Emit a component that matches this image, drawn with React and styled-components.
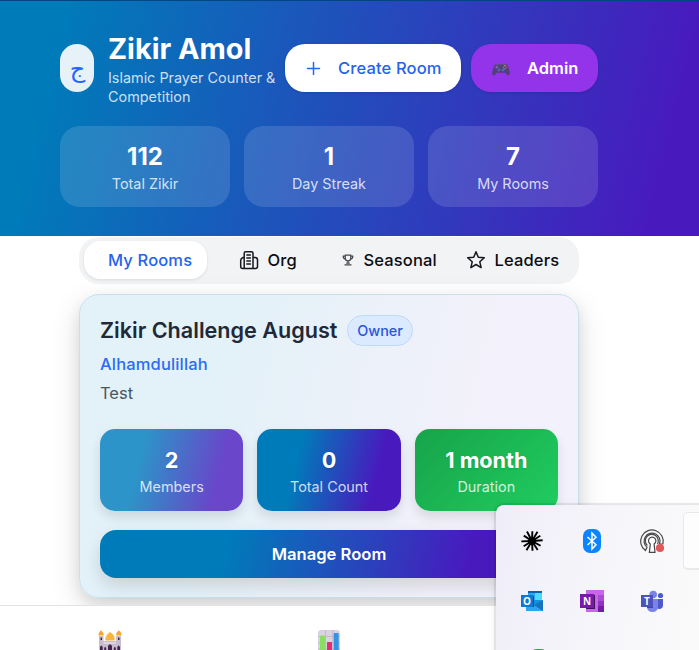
import React from "react";
import styled, { createGlobalStyle } from "styled-components";

const Global = createGlobalStyle`
  * { box-sizing: border-box; }
  html, body { margin: 0; background: #fff; overflow: hidden; }
  body { font-family: Inter, "Liberation Sans", sans-serif; }
`;

const Page = styled.div`
  position: relative;
  width: 699px;
  height: 650px;
  overflow: hidden;
  background: #fff;
`;

const Header = styled.header`
  height: 236px;
  border-top: 1px solid #004680;
  padding: 29px 101px 29px 60px;
  background: linear-gradient(104deg, #007bb9 9%, #481abe 93%) border-box;
`;

const HeaderRow = styled.div`
  display: flex;
  align-items: center;
  height: 76px;
`;

const Logo = styled.div`
  display: flex;
  align-items: center;
  justify-content: center;
  width: 34px;
  height: 48px;
  margin-right: 14px;
  border-radius: 17px;
  background: #e6f1f8;
  color: #2563ff;
  font: 24px/1 "DejaVu Sans", sans-serif;
  padding: 1px 0 0 1px;
`;

const Brand = styled.div`
  width: 177px;
`;

const Title = styled.h1`
  margin: 0;
  font-size: 28.8px;
  line-height: 38px;
  font-weight: 700;
  color: #fff;
  white-space: nowrap;
`;

const Subtitle = styled.p`
  margin: 0;
  font-size: 14.4px;
  line-height: 19px;
  color: rgba(255, 255, 255, 0.8);
  white-space: nowrap;
`;

const Action = styled.button`
  display: flex;
  align-items: center;
  width: ${(p) => p.$width}px;
  height: 48px;
  margin: 0 10px 0 0;
  padding: 0 0 0 20px;
  border: 0;
  border-radius: 20px;
  background: ${(p) => p.$bg};
  color: ${(p) => p.$color};
  font: ${(p) => p.$weight} 16.5px/24px Inter, sans-serif;
  letter-spacing: ${(p) => p.$tracking || 0}px;
  white-space: nowrap;
  box-shadow: 0 1px 3px rgba(0, 0, 0, 0.12);
  svg { flex: none; margin-right: ${(p) => p.$gap}px; }
  &:last-child { margin: 0; }
`;

const Stats = styled.div`
  display: grid;
  grid-template-columns: repeat(3, 1fr);
  gap: 14px;
  margin-top: 20px;
`;

const Stat = styled.div`
  height: 81px;
  padding-top: 15px;
  border-radius: 20px;
  text-align: center;
  color: #fff;
  background: rgba(255, 255, 255, 0.13);
`;

const StatValue = styled.div`
  font-size: 24px;
  line-height: 31px;
  font-weight: 700;
`;

const StatLabel = styled.div`
  font-size: 14.4px;
  line-height: 24px;
  color: rgba(255, 255, 255, 0.8);
`;

const Main = styled.main`
  height: 369px;
  padding: 1px 120px 0 79px;
  overflow: hidden;
`;

const Tabs = styled.nav`
  display: flex;
  height: 47px;
  padding: 4px 5px 5px;
  border-radius: 20px;
  background: #f2f3f5;
`;

const Tab = styled.div`
  display: flex;
  align-items: center;
  width: ${(p) => p.$width}px;
  height: 38px;
  padding-left: ${(p) => p.$pad}px;
  border-radius: 16px;
  font-size: 16.5px;
  letter-spacing: 0.15px;
  font-weight: 500;
  white-space: nowrap;
  color: ${(p) => (p.$active ? "#2563eb" : "#0b0d12")};
  background: ${(p) => (p.$active ? "#fff" : "transparent")};
  box-shadow: ${(p) => (p.$active ? "0 1px 3px rgba(0,0,0,.1)" : "none")};
  svg { flex: none; margin-right: ${(p) => p.$gap}px; }
`;

const Card = styled.section`
  height: 304px;
  margin-top: 10px;
  padding: 20px 20px 0;
  border: 1px solid #c8dfec;
  border-radius: 20px;
  background: linear-gradient(104deg, #e3f1f8 28%, #f3f1fb 75%);
  box-shadow: 0 10px 30px rgba(0, 0, 0, 0.13), 0 6px 14px rgba(0, 0, 0, 0.08);
`;

const CardHead = styled.div`
  display: flex;
  align-items: center;
  height: 31px;
`;

const RoomName = styled.h2`
  margin: 0;
  width: 247px;
  font-size: 21.6px;
  line-height: 31px;
  font-weight: 600;
  color: #1f2937;
  white-space: nowrap;
`;

const Badge = styled.span`
  width: 66px;
  height: 31px;
  border: 1px solid #bddafa;
  border-radius: 16px;
  background: #dbeafe;
  color: #2956db;
  font-size: 14.4px;
  font-weight: 500;
  line-height: 30px;
  text-align: center;
`;

const Phrase = styled.div`
  margin-top: 6px;
  font-size: 16.5px;
  letter-spacing: 0.15px;
  line-height: 24px;
  font-weight: 500;
  color: #2b6cf3;
`;

const Note = styled.div`
  margin-top: 5px;
  font-size: 16.5px;
  line-height: 24px;
  color: #4b5563;
`;

const Metrics = styled(Stats)`
  margin-top: 24px;
`;

const Metric = styled.div`
  height: 82px;
  padding-top: 17px;
  border-radius: 15px;
  text-align: center;
  color: #fff;
  background: ${(p) => p.$bg};
  box-shadow: 0 6px 12px rgba(0, 0, 0, 0.11);
`;

const MetricValue = styled.div`
  font-size: 21.6px;
  line-height: 29px;
  font-weight: 700;
  text-shadow: 0 1px 2px rgba(0, 0, 0, 0.15);
`;

const Manage = styled.button`
  display: block;
  width: 100%;
  height: 48px;
  margin-top: 19px;
  border: 0;
  border-radius: 16px;
  color: #fff;
  font: 600 16.6px/24px Inter, sans-serif;
  background: linear-gradient(104deg, #007bb9 28%, #481abe 80%);
  box-shadow: 0 8px 18px rgba(0, 0, 0, 0.13);
`;

const BottomNav = styled.footer`
  display: grid;
  grid-template-columns: 220px 218px 220px;
  justify-items: center;
  height: 45px;
  padding-top: 23px;
  border-top: 1px solid #e3e3e3;
  overflow: hidden;
`;

const Tray = styled.aside`
  position: absolute;
  left: 496px;
  top: 505px;
  width: 220px;
  height: 170px;
  padding: 6px;
  border-radius: 8px 0 0 0;
  background: linear-gradient(100deg, #efedf8 0%, #f6f5fa 45%, #fafafa 90%);
  box-shadow: 0 0 0 2px rgba(0, 0, 0, 0.07), 0 2px 8px rgba(0, 0, 0, 0.1);
  display: flex;
`;

const TrayGrid = styled.div`
  display: grid;
  grid-template-columns: repeat(3, 60px);
  grid-template-rows: repeat(3, 60px);
  place-items: center;
`;

const TrayButton = styled.div`
  flex: none;
  width: 50px;
  height: 58px;
  margin: 1px 0 0 1px;
  border: 1px solid #e9e9e9;
  border-bottom-width: 2px;
  border-radius: 5px;
  background: #fdfdfd;
`;

const LogoText = styled.text`
  font: 700 10px "Open Sans", sans-serif;
  fill: #fff;
  text-anchor: middle;
`;

const Plus = () => (
  <svg width="17" height="17" viewBox="0 0 17 17" fill="none" stroke="#2563ff" strokeWidth="1.5" strokeLinecap="round">
    <path d="M8.5 2.5v12M2.5 8.5h12" />
  </svg>
);

const Gamepad = () => (
  <svg width="20" height="16" viewBox="0 0 20 16">
    <path d="M6 4h8q2.5 0 3.200 2.500l1.600 6q.2 2.900-1.600 2.900-1.400 0-2.900-2.600H5.700Q4.200 15.400 2.800 15.400 1 15.400 1.200 12.500l1.600-6Q3.500 4 6 4Z" fill="#52407a" />
    <path d="M5 4.600q5-.8 10 0" stroke="#65508a" fill="none" />
    <path d="M5.800 5.700v2.800M4.400 7.100h2.800" stroke="#7a6cb8" strokeWidth="1.1" />
    <circle cx="8" cy="10" r="1.4" fill="#5665b5" /><circle cx="12" cy="10" r="1.4" fill="#5665b5" />
    <circle cx="14" cy="5.700" r=".8" fill="#e9a13c" /><circle cx="15.600" cy="7.200" r=".8" fill="#d8505c" />
    <circle cx="12.500" cy="7.200" r=".8" fill="#4c8ed6" /><circle cx="14" cy="8.700" r=".8" fill="#4da391" />
  </svg>
);

const Building = () => (
  <svg width="20" height="20" viewBox="0 0 20 20" fill="none" stroke="#14171c" strokeWidth="1.5" strokeLinejoin="round">
    <path d="M5.200 18.500V3.200Q5.200 1.700 6.700 1.700h5.800q1.500 0 1.500 1.500v15.300M5.200 7.500H4Q1.700 8.300 1.700 10.500v6q0 2 2 2h12.800q2 0 2-2V10q0-2.500-2.300-2.500H14" />
    <path d="M7.300 5h4.600M7.300 8h4.600M7.300 11h4.600M7.300 14h4.600" />
  </svg>
);

const Trophy = () => (
  <svg width="12" height="12" viewBox="0 0 12 12" fill="none" stroke="#45484d" strokeWidth="1.2">
    <path d="M3.300 1.200h5.400v3.200q0 2.200-2.700 2.500-2.700-.3-2.700-2.500ZM3.300 2.200H1.200q0 3 2.500 3M8.700 2.200h2.100q0 3-2.500 3M6 7v2M4.200 9.200h3.600M2.500 10.800h7" />
  </svg>
);

const Star = () => (
  <svg width="20" height="20" viewBox="0 0 20 20" fill="none" stroke="#14171c" strokeWidth="1.5" strokeLinejoin="round">
    <path d="m10 1.800 2.300 5.500 6 .5-4.500 4 1.300 5.800L10 14.500l-5.100 3.100 1.300-5.800-4.500-4 6-.5Z" />
  </svg>
);

const Mosque = () => (
  <svg width="24" height="26" viewBox="0 0 24 26">
    <path d="M1 7h4.500v5H18V7h5v19H1Z" fill="#c8bdcc" />
    <path d="M5.500 13H18v2H5.500Z" fill="#ded5e0" />
    <path d="M.5 6.500Q0 4 3.200 1.300 6.200 4 5.800 6.500ZM18 6.500q-.4-2.500 2.800-5.200Q24 4 23.500 6.500Z" fill="#f5a72d" />
    <path d="M7.500 11.500Q6 7 12 3q6 4 4.500 8.500Z" fill="#f8b43e" />
    <path d="M12 3Q8 6 8 9.500" stroke="#ffd66e" fill="none" />
    <path d="M2.500 11V9q.8-1.400 1.500 0v2ZM20 11V9q.8-1.400 1.500 0v2ZM2 26v-8q1.300-3 2.700 0v8ZM19.300 26v-8q1.300-3 2.700 0v8ZM10 26V17q2-3.500 4 0v9ZM6.200 26v-7q1-2 2 0v7ZM15.800 26v-7q1-2 2 0v7Z" fill="#45254f" />
  </svg>
);

const Chart = () => (
  <svg width="24" height="26" viewBox="0 0 24 26">
    <rect x="1" y="1" width="22" height="25" rx="3" fill="#d9d2e1" />
    <path d="M8.500 1v25M15.700 1v25M1 7.500h22M1 14h22M1 20h22" stroke="#bbb1c9" strokeWidth=".8" />
    <path d="M3 26V7.500q0-1 1-1h3q1 0 1 1V26Z" fill="#8ade62" />
    <path d="M10 26V14q0-1 1-1h3q1 0 1 1v12Z" fill="#e52e70" />
    <path d="M16.700 26V5q0-1 1-1h3q1 0 1 1v21Z" fill="#3394e6" />
  </svg>
);

const rays = [2, 31, 58, 86, 119, 148, 177, 211, 238, 268, 303, 332];

const Burst = () => (
  <svg width="24" height="24" viewBox="-12 -12 24 24" stroke="#000" strokeWidth="1.9">
    {rays.map((a, i) => <path key={a} d={`M0 0V${i % 2 ? -10.7 : -9.8}`} transform={`rotate(${a})`} />)}
    <circle r="3" />
  </svg>
);

const Bluetooth = () => (
  <svg width="18" height="24" viewBox="0 0 18 24">
    <rect width="18" height="24" rx="7" fill="#0a84ff" />
    <path d="m4.500 8 8.500 7.700L9 20V4l4 4.200L4.500 16" fill="none" stroke="#fff" strokeWidth="1.5" />
  </svg>
);

const Vpn = () => (
  <svg width="26" height="26" viewBox="0 0 26 26">
    <g fill="none" stroke="#484848" strokeWidth="1.2">
      <path d="M6.400 22.500A11.300 11.300 0 1 1 23.900 16h-3.400A8 8 0 1 0 8 19.300Z" />
      <path d="M8.300 17.500a6.500 6.500 0 1 1 10.200-1.500" />
      <path d="M11.300 16a3.700 3.700 0 1 1 3.800 0l.9 8.300h-5.600Z" fill="#fbfafc" />
    </g>
    <circle cx="21" cy="20" r="4.1" fill="#e05759" />
  </svg>
);

const Outlook = () => (
  <svg width="24" height="22" viewBox="0 0 24 22">
    <path d="M8 1h14v19H8Z" fill="#1490df" /><path d="M8 1h14v3H8Z" fill="#0364b8" />
    <path d="M8 3h7v7H8Z" fill="#28a8ea" /><path d="M15 3h7v7h-7Z" fill="#50d9ff" />
    <path d="M15 10h7v5h-7Z" fill="#1490df" />
    <path d="M23 10v11H6v-7l9 2Z" fill="#28a8ea" /><path d="m23 10-9 5 9 6Z" fill="#1674bd" />
    <path d="M7 6h7v11H7Z" fill="#0a4e91" /><path d="M1 5h12v12H1Z" fill="#0f78d4" />
    <LogoText x="7" y="14.7">O</LogoText>
  </svg>
);

const OneNote = () => (
  <svg width="24" height="22" viewBox="0 0 24 22">
    <path d="M6 0h18v22H6Z" fill="#ca64ea" /><path d="M18 5h6v6h-6Z" fill="#ae4bd5" />
    <path d="M18 11h6v5h-6Z" fill="#9332bf" /><path d="M18 16h6v6h-6Z" fill="#7719aa" />
    <path d="M6 5h9v14H6Z" fill="#3e1758" /><path d="M0 4h14v14H0Z" fill="#7719aa" />
    <LogoText x="7" y="14.7">N</LogoText>
  </svg>
);

const Teams = () => (
  <svg width="24" height="22" viewBox="0 0 24 22">
    <circle cx="13.2" cy="4.5" r="3.8" fill="#7b83eb" /><circle cx="20.5" cy="5.5" r="2.6" fill="#5059c9" />
    <path d="M16 9h7v6q0 4-4 4-3 0-3-4Z" fill="#5059c9" /><path d="M7 9h11v7q0 6-5.500 6T7 16Z" fill="#7b83eb" />
    <path d="M7 6h6v12H7Z" fill="#4147a1" /><path d="M1 5h12v12H1Z" fill="#4b53bc" />
    <LogoText x="7" y="14.5">T</LogoText>
  </svg>
);

const GreenDot = () => (
  <svg width="24" height="24" viewBox="0 0 24 24"><rect x="9" y="0" width="20" height="20" rx="8" fill="#16ad49" /></svg>
);

const stats = [["112", "Total Zikir"], ["1", "Day Streak"], ["7", "My Rooms"]];
const metrics = [
  ["2", "Members", "linear-gradient(104deg, #2c94c8 29%, #6946ca 80%)"],
  ["0", "Total Count", "linear-gradient(104deg, #007bb9 29%, #481abe 80%)"],
  ["1 month", "Duration", "linear-gradient(135deg, #17a34a, #20cd60)"],
];

export default function App() {
  return (
    <Page>
      <Global />
      <Header>
        <HeaderRow>
          <Logo>ج</Logo>
          <Brand>
            <Title>Zikir Amol</Title>
            <Subtitle>Islamic Prayer Counter &amp;<br />Competition</Subtitle>
          </Brand>
          <Action $width={176} $bg="#fff" $color="#2563eb" $weight={500} $gap={16} $tracking={0.15}><Plus />Create Room</Action>
          <Action $width={127} $bg="#9333ea" $color="#fff" $weight={600} $gap={16}><Gamepad />Admin</Action>
        </HeaderRow>
        <Stats>
          {stats.map(([value, label]) => (
            <Stat key={label}><StatValue>{value}</StatValue><StatLabel>{label}</StatLabel></Stat>
          ))}
        </Stats>
      </Header>
      <Main>
        <Tabs>
          <Tab $active $width={123} $pad={24}>My Rooms</Tab>
          <Tab $width={123} $pad={32} $gap={8.5}><Building />Org</Tab>
          <Tab $width={122} $pad={12} $gap={9.5}><Trophy />Seasonal</Tab>
          <Tab $width={122} $pad={14} $gap={8.5}><Star />Leaders</Tab>
        </Tabs>
        <Card>
          <CardHead><RoomName>Zikir Challenge August</RoomName><Badge>Owner</Badge></CardHead>
          <Phrase>Alhamdulillah</Phrase>
          <Note>Test</Note>
          <Metrics>
            {metrics.map(([value, label, bg]) => (
              <Metric key={label} $bg={bg}><MetricValue>{value}</MetricValue><StatLabel>{label}</StatLabel></Metric>
            ))}
          </Metrics>
          <Manage>Manage Room</Manage>
        </Card>
      </Main>
      <BottomNav><Mosque /><Chart /></BottomNav>
      <Tray>
        <TrayGrid>
          <Burst /><Bluetooth /><Vpn /><Outlook /><OneNote /><Teams /><GreenDot />
        </TrayGrid>
        <TrayButton />
      </Tray>
    </Page>
  );
}
